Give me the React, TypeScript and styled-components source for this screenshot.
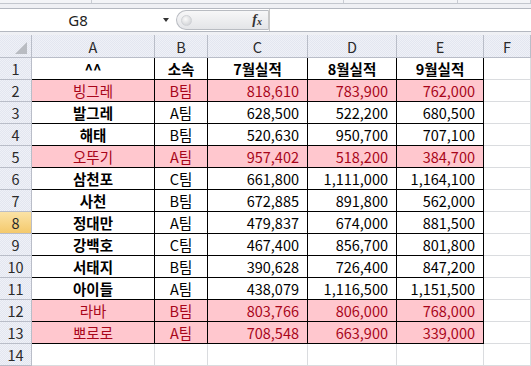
import styled, { createGlobalStyle } from "styled-components";

const GlobalStyle = createGlobalStyle`
    html, body {
        margin:0;
        padding:0;
        background:#eff0f4;
        overflow:hidden;
    }
    * { box-sizing:border-box; }
`;

const Page = styled.div`
    width:531px;
    height:366px;
    display:flex;
    flex-direction:column;
    font-family:"Noto Sans CJK KR", "Noto Sans", sans-serif;
    background:#eff0f4;
    overflow:hidden;
`;

const Ribbon = styled.div`
    height:4px;
    display:flex;
    border-bottom:1px solid #c3c7ce;
    background:#f3f4f7;
`;

const RibbonGroup = styled.div<{ $w?: number }>`
    width:${p => (p.$w ? p.$w + "px" : "auto")};
    flex:${p => (p.$w ? "none" : "1")};
    border-right:1px solid #c9ccd3;
`;

const FormulaBar = styled.div`
    margin-top:4px;
    height:24px;
    display:flex;
    align-items:center;
    background:#fff;
    border-top:1px solid #b4b8c0;
    border-bottom:1px solid #b4b8c0;
`;

const NameBox = styled.div`
    width:176px;
    height:100%;
    display:flex;
    align-items:center;
`;

const NameText = styled.div`
    width:156px;
    text-align:center;
    font-family:"Noto Sans", "Liberation Sans", sans-serif;
    font-size:15px;
    color:#1e1e1e;
`;

const DropArrow = styled.div`
    width:0;
    height:0;
    margin-left:7px;
    border-left:3px solid transparent;
    border-right:3px solid transparent;
    border-top:4px solid #333;
`;

const FxPill = styled.div`
    width:93px;
    height:20px;
    display:flex;
    align-items:center;
    justify-content:space-between;
    padding:0 6px 0 4px;
    border:1px solid #b9bcc2;
    border-right:1px solid #c8c8c8;
    border-radius:11px 0 0 11px;
    background:linear-gradient(#f7f7f8, #e4e5e8);
`;

const Knob = styled.div`
    width:11px;
    height:11px;
    border-radius:50%;
    background:radial-gradient(circle at 40% 35%, #fafafa, #c9cbcf);
    border:1px solid #d0d2d6;
`;

const Fx = styled.span`
    font-family:"Liberation Serif", serif;
    font-style:italic;
    font-weight:bold;
    font-size:14px;
    color:#333;
    sub {
        font-size:10px;
        vertical-align:-1px;
    }
`;

const FormulaInput = styled.div`
    flex:1;
    height:100%;
    border-left:1px solid #c8c8c8;
    background:#fff;
`;

const Sheet = styled.div`
    margin-top:3px;
    display:grid;
    grid-template-columns:32px 123px 53px 100px 89px 87px 1fr;
    grid-template-rows:23px;
    grid-auto-rows:22px;
    background:#fff;
`;

const HeadCell = styled.div<{ $sel?: boolean }>`
    display:flex;
    align-items:center;
    justify-content:center;
    font-size:14.5px;
    color:#2a2a2a;
    border-right:1px solid #b9bdc8;
    border-bottom:1px solid #b9bdc8;
    background:${p =>
        p.$sel
            ? "linear-gradient(#fbe3a6, #f4c96c)"
            : "repeating-conic-gradient(#e3e6f0 0 25%, #eff1f7 0 50%) 0 0 / 2px 2px"};
`;

const Corner = styled(HeadCell)`
    position:relative;
    &::after {
        content:"";
        position:absolute;
        right:4px;
        bottom:3px;
        width:0;
        height:0;
        border-left:12px solid transparent;
        border-bottom:12px solid #b9bcc2;
    }
`;

const Cell = styled.div<{ $pink?: boolean; $bold?: boolean; $num?: boolean; $boxed?: boolean }>`
    display:flex;
    align-items:center;
    justify-content:${p => (p.$num ? "flex-end" : "center")};
    padding:0 ${p => (p.$num ? "8px" : "0")} 0 0;
    font-size:14.5px;
    font-weight:${p => (p.$bold ? 700 : 400)};
    color:${p => (p.$pink ? "#a8051a" : "#000")};
    background:${p => (p.$pink ? "#ffc7ce" : "#fff")};
    border-right:1px solid ${p => (p.$boxed ? "#000" : "#dadcdf")};
    border-bottom:1px solid ${p => (p.$boxed ? "#000" : "#dadcdf")};
    white-space:nowrap;
`;

type Row = { name: string; team: string; m7: string; m8: string; m9: string; pink?: boolean };

const rows: Row[] = [
    { name: "빙그레", team: "B팀", m7: "818,610", m8: "783,900", m9: "762,000", pink: true },
    { name: "발그레", team: "A팀", m7: "628,500", m8: "522,200", m9: "680,500" },
    { name: "해태", team: "B팀", m7: "520,630", m8: "950,700", m9: "707,100" },
    { name: "오뚜기", team: "A팀", m7: "957,402", m8: "518,200", m9: "384,700", pink: true },
    { name: "삼천포", team: "C팀", m7: "661,800", m8: "1,111,000", m9: "1,164,100" },
    { name: "사천", team: "B팀", m7: "672,885", m8: "891,800", m9: "562,000" },
    { name: "정대만", team: "A팀", m7: "479,837", m8: "674,000", m9: "881,500" },
    { name: "강백호", team: "C팀", m7: "467,400", m8: "856,700", m9: "801,800" },
    { name: "서태지", team: "B팀", m7: "390,628", m8: "726,400", m9: "847,200" },
    { name: "아이들", team: "A팀", m7: "438,079", m8: "1,116,500", m9: "1,151,500" },
    { name: "라바", team: "B팀", m7: "803,766", m8: "806,000", m9: "768,000", pink: true },
    { name: "뽀로로", team: "A팀", m7: "708,548", m8: "663,900", m9: "339,000", pink: true },
];

const App = () => {
    return (
        <>
            <GlobalStyle />
            <Page>
                <Ribbon>
                    <RibbonGroup $w={92} />
                    <RibbonGroup $w={252} />
                    <RibbonGroup $w={114} />
                    <RibbonGroup />
                </Ribbon>
                <FormulaBar>
                    <NameBox>
                        <NameText>G8</NameText>
                        <DropArrow />
                    </NameBox>
                    <FxPill>
                        <Knob />
                        <Fx>f<sub>x</sub></Fx>
                    </FxPill>
                    <FormulaInput />
                </FormulaBar>
                <Sheet>
                    <Corner />
                    {["A", "B", "C", "D", "E", "F"].map(c => (
                        <HeadCell key={c}>{c}</HeadCell>
                    ))}

                    <HeadCell>1</HeadCell>
                    <Cell $bold $boxed>^^</Cell>
                    <Cell $bold $boxed>소속</Cell>
                    <Cell $bold $boxed>7월실적</Cell>
                    <Cell $bold $boxed>8월실적</Cell>
                    <Cell $bold $boxed>9월실적</Cell>
                    <Cell />

                    {rows.map((r, i) => (
                        <>
                            <HeadCell key={"h" + i} $sel={i + 2 === 8}>{i + 2}</HeadCell>
                            <Cell key={"a" + i} $boxed $pink={r.pink} $bold={!r.pink}>{r.name}</Cell>
                            <Cell key={"b" + i} $boxed $pink={r.pink}>{r.team}</Cell>
                            <Cell key={"c" + i} $boxed $pink={r.pink} $num>{r.m7}</Cell>
                            <Cell key={"d" + i} $boxed $pink={r.pink} $num>{r.m8}</Cell>
                            <Cell key={"e" + i} $boxed $pink={r.pink} $num>{r.m9}</Cell>
                            <Cell key={"f" + i} />
                        </>
                    ))}

                    <HeadCell>14</HeadCell>
                    <Cell />
                    <Cell />
                    <Cell />
                    <Cell />
                    <Cell />
                    <Cell />
                </Sheet>
            </Page>
        </>
    );
};

export default App;
